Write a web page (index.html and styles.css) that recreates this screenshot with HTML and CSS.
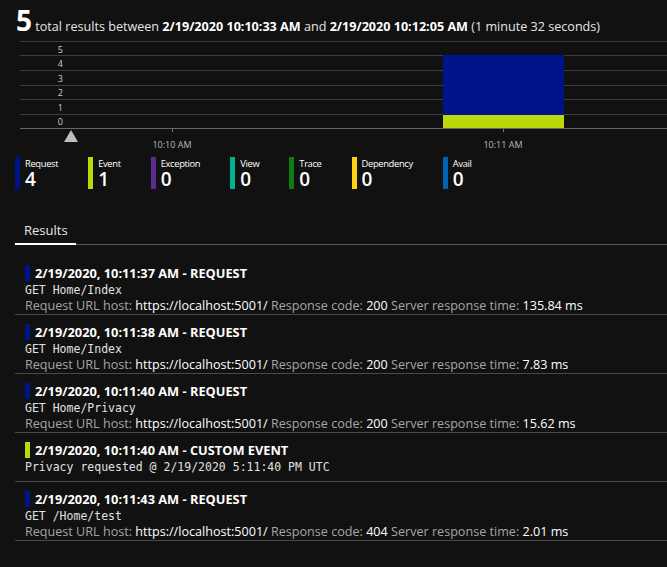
FILE: index.html
```html
<!DOCTYPE html>
<html>
<head>
<meta charset="utf-8">
<link rel="stylesheet" href="styles.css">
</head>
<body>
<div class="summary"><span class="count">5</span> total results between <b>2/19/2020 10:10:33 AM</b> and <b>2/19/2020 10:12:05 AM</b> (1 minute 32 seconds)</div>
<svg class="chart" width="667" height="115" viewBox="0 0 667 115">
  <g class="grid">
    <line x1="20" y1="5.5" x2="667" y2="5.5"/>
    <line x1="20" y1="19.5" x2="667" y2="19.5"/>
    <line x1="20" y1="34.5" x2="667" y2="34.5"/>
    <line x1="20" y1="49.5" x2="667" y2="49.5"/>
    <line x1="20" y1="63.5" x2="667" y2="63.5"/>
    <line x1="20" y1="78.5" x2="667" y2="78.5"/>
  </g>
  <g class="ylabels">
    <text x="63" y="17">5</text>
    <text x="63" y="31">4</text>
    <text x="63" y="46">3</text>
    <text x="63" y="60">2</text>
    <text x="63" y="75">1</text>
    <text x="63" y="89">0</text>
  </g>
  <rect class="bar-request" x="443" y="19" width="121" height="60"/>
  <rect class="bar-event" x="443" y="79" width="121" height="13"/>
  <line class="axis" x1="20" y1="92.5" x2="667" y2="92.5"/>
  <line class="tick" x1="172.5" y1="93" x2="172.5" y2="96"/>
  <line class="tick" x1="503.5" y1="93" x2="503.5" y2="96"/>
  <polygon class="marker" points="64,106 71,94 78,106"/>
  <g class="xlabels">
    <text x="172" y="112">10:10 AM</text>
    <text x="503" y="112">10:11 AM</text>
  </g>
</svg>
<div class="legend">
  <div class="legend-item"><span class="swatch c-request"></span><div class="legend-text"><div class="legend-label">Request</div><div class="legend-num">4</div></div></div>
  <div class="legend-item"><span class="swatch c-event"></span><div class="legend-text"><div class="legend-label">Event</div><div class="legend-num">1</div></div></div>
  <div class="legend-item"><span class="swatch c-exception"></span><div class="legend-text"><div class="legend-label">Exception</div><div class="legend-num">0</div></div></div>
  <div class="legend-item"><span class="swatch c-view"></span><div class="legend-text"><div class="legend-label">View</div><div class="legend-num">0</div></div></div>
  <div class="legend-item"><span class="swatch c-trace"></span><div class="legend-text"><div class="legend-label">Trace</div><div class="legend-num">0</div></div></div>
  <div class="legend-item"><span class="swatch c-dependency"></span><div class="legend-text"><div class="legend-label">Dependency</div><div class="legend-num">0</div></div></div>
  <div class="legend-item"><span class="swatch c-avail"></span><div class="legend-text"><div class="legend-label">Avail</div><div class="legend-num">0</div></div></div>
</div>
<div class="tabs"><div class="tab active">Results</div></div>
<div class="results">
  <div class="row">
    <div class="row-title"><span class="flag c-request"></span>2/19/2020, 10:11:37 AM - REQUEST</div>
    <div class="row-mono">GET Home/Index</div>
    <div class="row-info">Request URL host: <span class="v">https://localhost:5001/</span> Response code: <span class="v">200</span> Server response time: <span class="v">135.84 ms</span></div>
  </div>
  <div class="row">
    <div class="row-title"><span class="flag c-request"></span>2/19/2020, 10:11:38 AM - REQUEST</div>
    <div class="row-mono">GET Home/Index</div>
    <div class="row-info">Request URL host: <span class="v">https://localhost:5001/</span> Response code: <span class="v">200</span> Server response time: <span class="v">7.83 ms</span></div>
  </div>
  <div class="row">
    <div class="row-title"><span class="flag c-request"></span>2/19/2020, 10:11:40 AM - REQUEST</div>
    <div class="row-mono">GET Home/Privacy</div>
    <div class="row-info">Request URL host: <span class="v">https://localhost:5001/</span> Response code: <span class="v">200</span> Server response time: <span class="v">15.62 ms</span></div>
  </div>
  <div class="row row-event">
    <div class="row-title"><span class="flag c-event"></span>2/19/2020, 10:11:40 AM - CUSTOM EVENT</div>
    <div class="row-mono">Privacy requested @ 2/19/2020 5:11:40 PM UTC</div>
  </div>
  <div class="row">
    <div class="row-title"><span class="flag c-request"></span>2/19/2020, 10:11:43 AM - REQUEST</div>
    <div class="row-mono">GET /Home/test</div>
    <div class="row-info">Request URL host: <span class="v">https://localhost:5001/</span> Response code: <span class="v">404</span> Server response time: <span class="v">2.01 ms</span></div>
  </div>
</div>
</body>
</html>
```
FILE: styles.css
```css
html, body {
  margin: 0;
  padding: 0;
  background: #111111;
  color: #ffffff;
  font-family: "Open Sans", "Noto Sans", sans-serif;
}
.summary {
  box-sizing: border-box;
  height: 36px;
  padding: 5px 0 0 16px;
  font-size: 12.6px;
  line-height: 31px;
  color: #e6e6e6;
  white-space: nowrap;
}
.summary b {
  color: #ffffff;
  font-weight: 700;
}
.count {
  font-size: 28px;
  font-weight: 700;
  color: #ffffff;
}
.chart {
  display: block;
}
.grid line {
  stroke: #3e3e3e;
  stroke-width: 1;
}
.axis {
  stroke: #666666;
  stroke-width: 1;
}
.tick {
  stroke: #777777;
  stroke-width: 1;
}
.ylabels text {
  font-family: "Open Sans", sans-serif;
  font-size: 9px;
  fill: #cccccc;
  text-anchor: end;
}
.xlabels text {
  font-family: "Open Sans", sans-serif;
  font-size: 9px;
  fill: #bbbbbb;
  text-anchor: middle;
}
.bar-request { fill: #001489; }
.bar-event { fill: #bad80a; }
.marker { fill: #bdbdbd; }
.legend {
  display: flex;
  gap: 30px;
  padding-left: 15px;
  margin-top: 6px;
  height: 32px;
}
.legend-item {
  display: flex;
  gap: 5px;
}
.swatch {
  width: 5px;
  height: 32px;
}
.legend-text {
  display: flex;
  flex-direction: column;
}
.legend-label {
  font-size: 9.4px;
  line-height: 13px;
  letter-spacing: -0.35px;
  white-space: nowrap;
}
.legend-num {
  font-size: 19px;
  line-height: 19px;
  font-weight: 600;
}
.c-request { background: #001489; }
.c-event { background: #bad80a; }
.c-exception { background: #5c2d91; }
.c-view { background: #00b294; }
.c-trace { background: #107c10; }
.c-dependency { background: #fcd116; }
.c-avail { background: #0063b1; }
.tabs {
  display: flex;
  margin: 32px 0 0 15px;
  border-bottom: 1px solid #5a5a5a;
}
.tab {
  font-size: 13px;
  line-height: 18px;
  padding: 0 9px 4px 9px;
  width: 43px;
  color: #e8e8e8;
}
.tab.active {
  border-bottom: 2px solid #ffffff;
  margin-bottom: -1px;
}
.results {
  margin: 11px 0 0 15px;
}
.row {
  padding: 8px 0 0 10px;
  border-bottom: 1px solid #4a4a4a;
}
.row.row-event {
  padding-bottom: 6px;
}
.row-title {
  display: flex;
  align-items: center;
  gap: 5px;
  font-size: 12.8px;
  font-weight: 700;
  line-height: 18px;
  color: #ffffff;
}
.flag {
  width: 5px;
  height: 16px;
}
.row-mono {
  font-family: "DejaVu Sans Mono", "Liberation Mono", monospace;
  font-size: 11.5px;
  line-height: 16px;
  color: #e0e0e0;
  white-space: pre;
}
.row-info {
  font-size: 12.6px;
  line-height: 16px;
  color: #a6a6a6;
  white-space: nowrap;
}
.row-info .v {
  color: #ffffff;
}
```
